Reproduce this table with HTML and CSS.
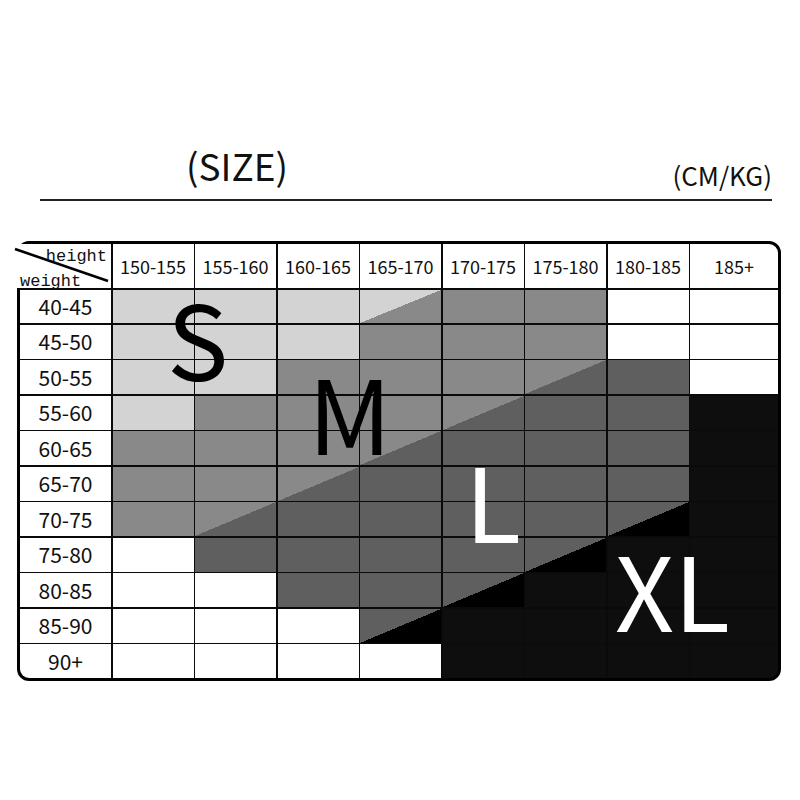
FILE: index.html
```html
<!DOCTYPE html>
<html>
<head>
<meta charset="utf-8">
<link rel="stylesheet" href="styles.css">
</head>
<body>
<div class="page">
  <div class="title-row">
    <span class="size">(SIZE)</span>
    <span class="unit">(CM/KG)</span>
  </div>
  <div class="chart">
    <div class="corner">
      <svg class="slash" width="100" height="44" viewBox="0 0 100 44"><line x1="-2" y1="5" x2="91" y2="37" stroke="#000" stroke-width="2.6"/></svg>
      <span class="h-lab">height</span>
      <span class="w-lab">weight</span>
    </div>
    <div class="hd">150-155</div><div class="hd">155-160</div><div class="hd">160-165</div><div class="hd">165-170</div><div class="hd">170-175</div><div class="hd">175-180</div><div class="hd">180-185</div><div class="hd tr">185+</div>

    <div class="lb">40-45</div><div class="s"></div><div class="s"></div><div class="s"></div><div class="sm"></div><div class="m"></div><div class="m"></div><div class="w"></div><div class="w"></div>
    <div class="lb">45-50</div><div class="s"></div><div class="s"></div><div class="s"></div><div class="m"></div><div class="m"></div><div class="m"></div><div class="w"></div><div class="w"></div>
    <div class="lb">50-55</div><div class="s"></div><div class="s"></div><div class="m"></div><div class="m"></div><div class="m"></div><div class="ml"></div><div class="l"></div><div class="w"></div>
    <div class="lb">55-60</div><div class="s"></div><div class="m"></div><div class="m"></div><div class="m"></div><div class="ml"></div><div class="l"></div><div class="l"></div><div class="x"></div>
    <div class="lb">60-65</div><div class="m"></div><div class="m"></div><div class="m"></div><div class="ml"></div><div class="l"></div><div class="l"></div><div class="l"></div><div class="x"></div>
    <div class="lb">65-70</div><div class="m"></div><div class="m"></div><div class="ml"></div><div class="l"></div><div class="l"></div><div class="l"></div><div class="l"></div><div class="x"></div>
    <div class="lb">70-75</div><div class="m"></div><div class="ml"></div><div class="l"></div><div class="l"></div><div class="l"></div><div class="l"></div><div class="lx"></div><div class="x"></div>
    <div class="lb">75-80</div><div class="w"></div><div class="l"></div><div class="l"></div><div class="l"></div><div class="l"></div><div class="lx"></div><div class="x"></div><div class="x"></div>
    <div class="lb">80-85</div><div class="w"></div><div class="w"></div><div class="l"></div><div class="l"></div><div class="lx"></div><div class="x"></div><div class="x"></div><div class="x"></div>
    <div class="lb">85-90</div><div class="w"></div><div class="w"></div><div class="w"></div><div class="lx"></div><div class="x"></div><div class="x"></div><div class="x"></div><div class="x"></div>
    <div class="lb bl">90+</div><div class="w"></div><div class="w"></div><div class="w"></div><div class="w"></div><div class="x"></div><div class="x"></div><div class="x"></div><div class="x br"></div>

    <span class="big big-s">S</span>
    <span class="big big-m">M</span>
    <span class="big big-l">L</span>
    <span class="big big-xl">XL</span>
  </div>
</div>
</body>
</html>
```

FILE: styles.css
```css
html, body {
  margin: 0;
  padding: 0;
  background: #fff;
}

.page {
  padding-top: 147px;
  font-family: "Noto Sans CJK SC", "Noto Sans", sans-serif;
  color: #111;
}

.title-row {
  display: flex;
  justify-content: space-between;
  align-items: flex-end;
  width: 732px;
  margin-left: 40px;
  padding-bottom: 11px;
  border-bottom: 2px solid #222;
}

.size {
  font-size: 37px;
  line-height: 1;
  padding-left: 146px;
  margin-bottom: 4px;
}

.unit {
  font-size: 26px;
  line-height: 1;
}

.chart {
  position: relative;
  box-sizing: border-box;
  width: 764px;
  height: 440px;
  margin: 40px 0 0 17px;
  border: 3px solid #000;
  border-radius: 12px;
  background: #0a0a0a;
  display: grid;
  grid-template-columns: 91px repeat(7, 81px) 1fr;
  grid-template-rows: 44px repeat(11, 1fr);
  gap: 1.5px;
}

.corner {
  position: relative;
  margin-left: -3px;
  background: #fff;
  font-family: "Liberation Mono", monospace;
  font-size: 17px;
  line-height: 1;
}

.slash {
  position: absolute;
  left: 0;
  top: 0;
  overflow: visible;
}

.h-lab {
  position: absolute;
  right: 4px;
  top: 4px;
}

.w-lab {
  position: absolute;
  left: 3px;
  top: 29px;
}

.hd {
  background: #fff;
  display: flex;
  align-items: center;
  justify-content: center;
  font-size: 18px;
  line-height: 1;
  white-space: nowrap;
}

.tr {
  border-top-right-radius: 9px;
}

.lb {
  background: #fff;
  display: flex;
  align-items: center;
  justify-content: center;
  font-size: 21px;
  line-height: 1;
}

.bl {
  border-bottom-left-radius: 9px;
}

.br {
  border-bottom-right-radius: 9px;
}

.w { background: #fff; }
.s { background: #d3d3d3; }
.m { background: #898989; }
.l { background: #5f5f5f; }
.x { background: #0e0e0e; }

.sm { background: linear-gradient(to bottom right, #d3d3d3 50%, #898989 50%); }
.ml { background: linear-gradient(to bottom right, #898989 50%, #5f5f5f 50%); }
.lx { background: linear-gradient(to bottom right, #5f5f5f 50%, #000 50%); }

.big {
  position: absolute;
  font-family: "Noto Sans CJK SC", "Noto Sans", sans-serif;
  font-size: 103px;
  line-height: 1;
}

.big-s { left: 147px; top: 41px; color: #000; }
.big-m { left: 288px; top: 115px; color: #000; }
.big-l { left: 445px; top: 203px; color: #fff; }
.big-xl { left: 595px; top: 292px; color: #fff; }
```
